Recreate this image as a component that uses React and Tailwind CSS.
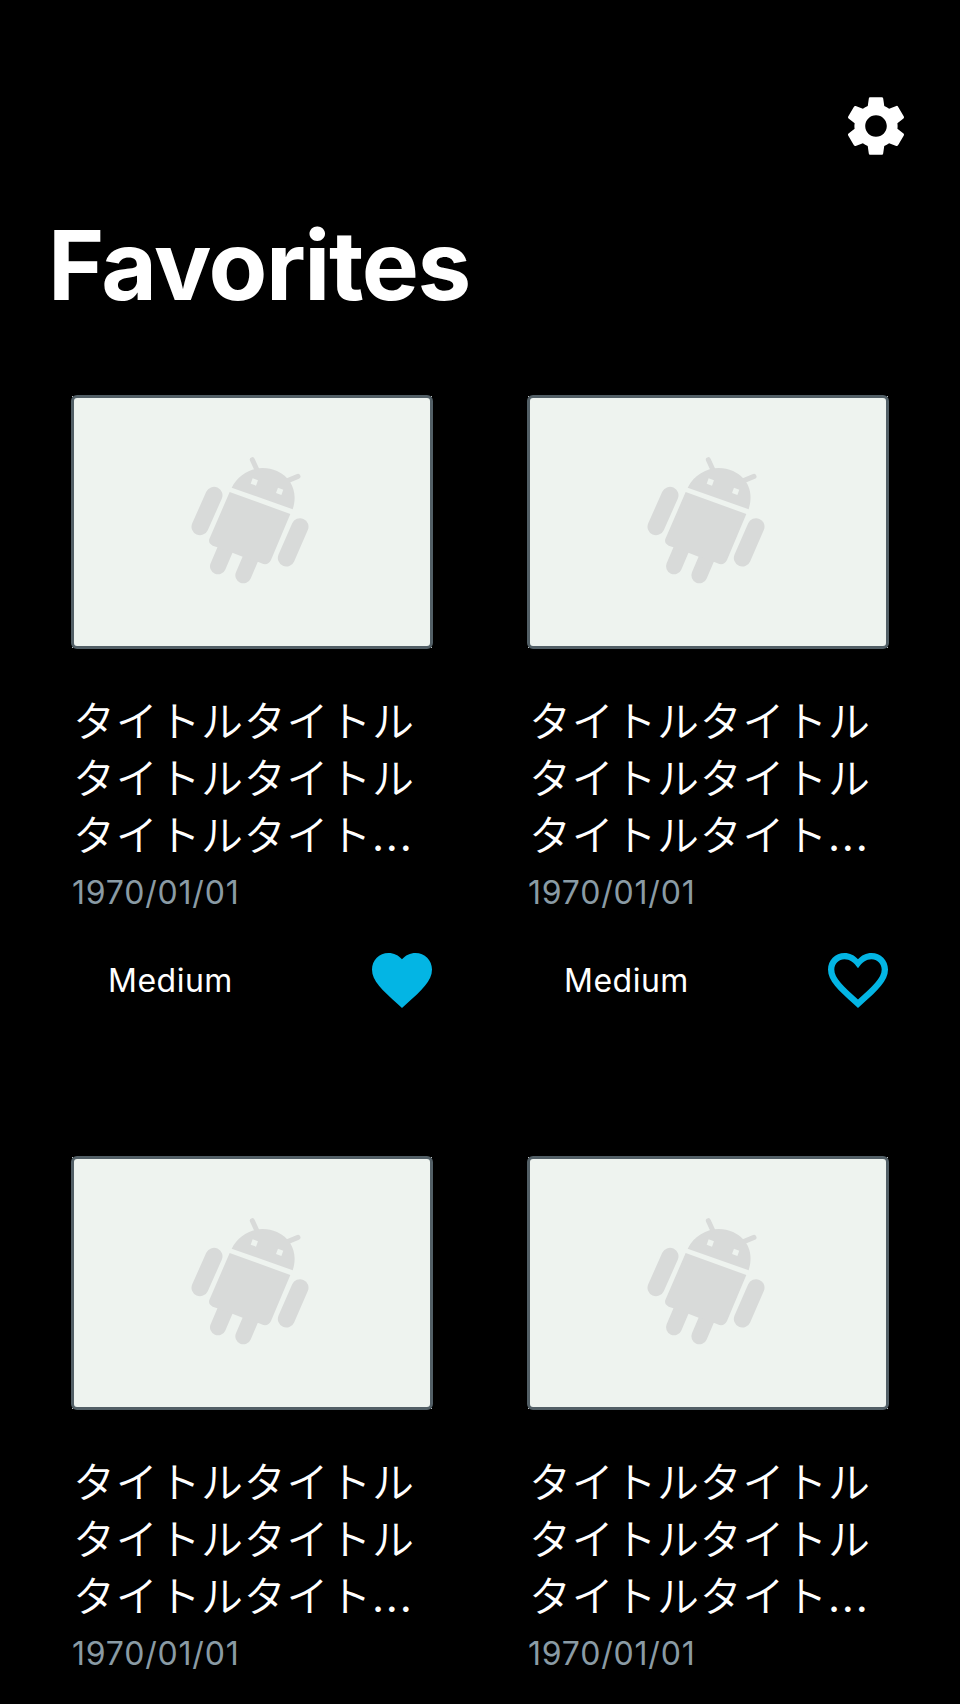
import { MdSettings, MdFavorite } from "react-icons/md";

const LINES = ["タイトルタイトル", "タイトルタイトル", "タイトルタイト"];

const items = [
  { id: 1, source: "Medium", favorite: true },
  { id: 2, source: "Medium", favorite: false },
  { id: 3 },
  { id: 4 },
];

function HeartOutline() {
  return (
    <svg viewBox="0 0 24 24" className="size-[72px]" fill="currentColor">
      <path
        fillRule="evenodd"
        d="M12 21.350l-1.450-1.320C5.400 15.360 2 12.280 2 8.500 2 5.420 4.420 3 7.500 3c1.740 0 3.410.810 4.500 2.090C13.090 3.810 14.760 3 16.500 3 19.580 3 22 5.420 22 8.500c0 3.780-3.400 6.860-8.550 11.540L12 21.350z M12 18.500C16.860 14.100 19.900 11.350 19.900 8.500C19.900 6.500 18.400 5.050 16.500 5.050C14.800 5.050 13.350 6 12 8.100C10.650 6 9.200 5.050 7.500 5.050C5.600 5.050 4.100 6.500 4.100 8.500C4.100 11.350 7.140 14.100 12 18.500Z"
      />
    </svg>
  );
}

function Robot() {
  return (
    <svg viewBox="0 0 420 480" className="h-[160px] w-[140px]" fill="none" strokeLinecap="round">
      <g stroke="#d8dad9">
        <path d="M217 59 230 88M354 109 325 121" strokeWidth="15" />
        <path d="M102 166 60 260M360 260 319 354" strokeWidth="51" />
        <path d="M137 325 114 379M213 352 190 406" strokeWidth="48" />
      </g>
      <path d="M155 143C181 91 241 70 291 93C337 114 354 160 338 208Z" fill="#d8dad9" />
      <path
        d="M149 156 331 222 273 360Q266 375 250 372L235 366 188 350 159 339 112 322 98 317Q84 309 88 297Z"
        fill="#d8dad9"
      />
      <rect x="214.500" y="117.500" width="17" height="17" transform="rotate(20 223 126)" fill="#eef3ef" />
      <rect x="290.500" y="145.500" width="17" height="17" transform="rotate(20 299 154)" fill="#eef3ef" />
    </svg>
  );
}

function Card({ source, favorite }) {
  return (
    <article className="h-[761px] w-[362px]">
      <div className="relative -ml-px flex h-[254px] w-[362px] justify-center rounded-md border-[3px] border-[#525f66] bg-[#eef3ef]">
        <span className="absolute -top-[2px] -left-[2px] size-px bg-[#b5bdc0]" />
        <span className="absolute -top-[2px] -right-[2px] size-px bg-[#b5bdc0]" />
        <span className="absolute -bottom-[2px] -left-[2px] size-px bg-[#b5bdc0]" />
        <span className="absolute -right-[2px] -bottom-[2px] size-px bg-[#b5bdc0]" />
        <div className="-ml-[4px] mt-[42px]">
          <Robot />
        </div>
      </div>
      <h2 className="mt-[44px] h-[171px] w-[362px] pl-px font-['Inter','Noto_Sans_CJK_JP',sans-serif] text-[42px] leading-[57px] font-[350] tracking-[0.7px] whitespace-nowrap text-white">
        {LINES.map((line, i) => (
          <span key={i} className="block">
            {line}
            {i === 2 && <span className="font-['Inter'] font-normal tracking-[1.800px]">...</span>}
          </span>
        ))}
      </h2>
      <p className="mt-[9px] text-[32px] leading-[40px] font-normal tracking-[0.8px] text-[#8a9ba5]">1970/01/01</p>
      {source && (
        <div className="mt-[31px] flex h-[72px] items-center justify-between pl-[36px]">
          <span className="pt-[2px] text-[32px] leading-[40px] font-normal tracking-[0.5px] text-white">{source}</span>
          <button className="-mr-[4px] text-[#03b5e4]" aria-label="Favorite">
            {favorite ? <MdFavorite className="size-[72px]" /> : <HeartOutline />}
          </button>
        </div>
      )}
    </article>
  );
}

export default function App() {
  return (
    <main className="h-[1704px] w-[960px] overflow-hidden bg-black font-['Inter',sans-serif]">
      <header className="flex justify-end pt-[90px] pr-12">
        <button className="text-white" aria-label="Settings">
          <MdSettings className="size-[72px]" />
        </button>
      </header>
      <h1 className="mt-[43px] h-[120px] pl-[48px] text-[96px] leading-[120px] font-bold tracking-[-1.400px] text-white">
        Favorites
      </h1>
      <section className="mt-[70px] grid grid-cols-[362px_362px] gap-x-[94px] pl-[72px]">
        {items.map((item) => (
          <Card key={item.id} source={item.source} favorite={item.favorite} />
        ))}
      </section>
    </main>
  );
}
